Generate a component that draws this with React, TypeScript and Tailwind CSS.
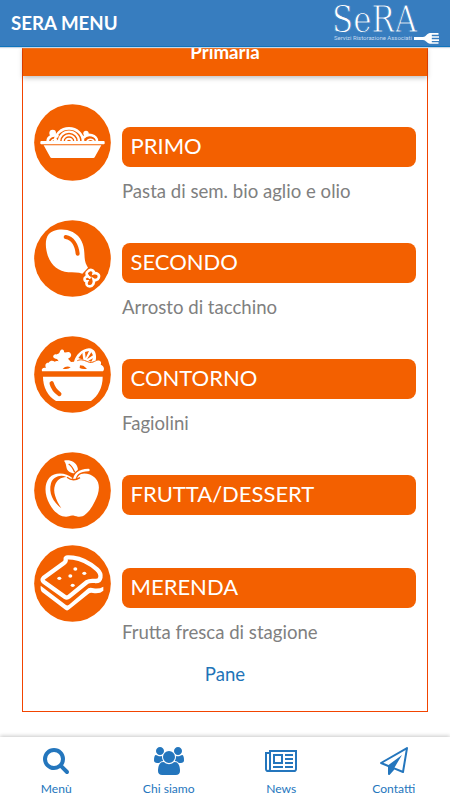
import type { ReactNode } from "react";

const ORANGE = "#f36000";

function PastaIcon() {
  return (
    <svg viewBox="42 27 231 231" className="block size-[77px]">
      <circle cx="157.5" cy="142.5" r="115" fill={ORANGE} />
      <circle cx="98" cy="114" r="10" fill="#fff" />
      <circle cx="198" cy="115" r="8" fill="#fff" />
      <g fill="none" stroke="#fff" strokeWidth="6">
        <path d="M105 139A42 39 0 0 1 189 139" strokeWidth="8" />
        <path d="M117 139A30 29 0 0 1 177 139" strokeWidth="7" />
        <path d="M128 139A19 18 0 0 1 166 139" />
        <path d="M138 139A9 8 0 0 1 156 139" />
        <path d="M83 139A20 18 0 0 1 115 125" strokeWidth="8" />
        <path d="M94 139A10 9 0 0 1 113 139" strokeWidth="5" />
        <path d="M190 129A22 18 0 0 1 231 139" strokeWidth="8" />
        <path d="M201 139A11 9 0 0 1 222 139" strokeWidth="5" />
      </g>
      <rect x="61" y="138" width="193" height="10" rx="3" fill="#fff" />
      <path d="M71 151H244L224 187Q223 189 220 189H95Q92 189 91 187Z" fill="#fff" />
    </svg>
  );
}

function DrumstickIcon() {
  return (
    <svg viewBox="42 30 231 231" className="block size-[77px]">
      <circle cx="157.5" cy="145.5" r="115" fill={ORANGE} />
      <path d="M86 73C99 58 132 53 158 66C184 80 192 105 193 128C194 145 194 156 201 168L204 173L187 191C175 187 160 188 145 187C116 185 94 167 84 139C76 115 74 88 86 73Z" fill="#fff" />
      <path d="M137 81C157 84 170 104 173 131" fill="none" stroke={ORANGE} strokeWidth="12" strokeLinecap="round" />
      <path d="M204 184C212 176 223 181 221 190C230 187 240 194 236 203C233 211 224 211 221 209C224 218 219 229 209 229C200 229 197 221 201 214C193 214 191 205 197 201C202 198 207 199 209 203M204 184C198 187 199 194 203 197" fill="none" stroke="#fff" strokeWidth="8" strokeLinecap="round" />
    </svg>
  );
}

function SaladIcon() {
  return (
    <svg viewBox="42 33 231 231" className="block size-[77px]">
      <circle cx="157.5" cy="148.5" r="115" fill={ORANGE} />
      <path d="M66 139C63 131 70 127 78 129C74 120 77 112 86 113C91 105 99 106 104 110C108 107 112 108 116 109L111 102C99 102 95 91 106 88C113 89 119 86 120 79C123 70 134 72 132 82C139 84 146 78 151 84C157 91 151 99 144 101L153 111L162 110C168 90 184 72 207 70C225 71 231 87 227 108C238 103 247 110 242 119C252 123 255 132 249 139Z" fill="#fff" />
      <path d="M172 107C184 101 195 107 208 112C217 114 222 109 227 108" fill="none" stroke={ORANGE} strokeWidth="3" />
      <path d="M175 99L187 84L190 104ZM195 81L207 78L197 99ZM214 82L219 91L201 103ZM205 107L219 100L214 110Z" fill={ORANGE} />
      <path d="M128 131Q139 121 152 127Q144 135 128 131ZM180 121L190 122L201 131Q188 133 179 129Z" fill={ORANGE} />
      <path d="M69 155H248C248 187 235 211 213 228H108C83 213 69 186 69 155Z" fill="#fff" />
      <path d="M95 175Q100 194 118 207" fill="none" stroke={ORANGE} strokeWidth="13" strokeLinecap="round" />
    </svg>
  );
}

function AppleIcon() {
  return (
    <svg viewBox="42 21 231 231" className="block size-[77px]">
      <circle cx="157.5" cy="136.5" r="115" fill={ORANGE} />
      <path d="M158 100C176 80 208 82 225 98C244 117 237 146 224 170C210 198 194 218 174 215C164 213 156 209 147 214C127 220 103 204 89 178C73 150 72 116 88 98C105 80 138 82 158 100Z" fill="#fff" />
      <path d="M139 96C121 87 99 96 93 115C85 143 99 172 124 190C107 164 98 140 105 121C111 104 122 97 139 96Z" fill={ORANGE} />
      <path d="M132 47C150 43 167 51 172 65C176 73 172 80 169 86C155 86 143 80 140 70C138 61 138 54 132 47Z" fill="#fff" />
      <path d="M146 57Q157 64 164 82" fill="none" stroke={ORANGE} strokeWidth="4" />
      <path d="M164 103C163 89 177 76 205 75" fill="none" stroke={ORANGE} strokeWidth="15" />
      <path d="M163 107C163 89 177 76 205 75" fill="none" stroke="#fff" strokeWidth="8" strokeLinecap="round" />
      <path d="M141 97Q159 111 180 98" fill="none" stroke={ORANGE} strokeWidth="4" />
    </svg>
  );
}

function ToastIcon() {
  return (
    <svg viewBox="42 21 231 231" className="block size-[77px]">
      <circle cx="157.5" cy="136.5" r="115" fill={ORANGE} />
      <path d="M62 143L138 201Q142 204 147 200L205 151Q211 147 221 151Q237 154 250 146V158Q240 168 219 165Q211 163 205 168L148 214Q142 220 136 215L66 162Q61 157 62 143Z" fill="#fff" />
      <path d="M71 119L133 74Q138 70 137 64C135 56 150 58 159 59C185 62 211 77 231 94C248 110 243 130 226 129C216 128 208 127 201 132L147 176Q141 181 135 177L72 132Q64 126 71 119Z" fill={ORANGE} stroke="#fff" strokeWidth="13" strokeLinejoin="round" />
      <g fill="#fff">
        <ellipse cx="166" cy="93" rx="6" ry="5" />
        <ellipse cx="151" cy="114" rx="6" ry="5" />
        <ellipse cx="193" cy="106" rx="6" ry="5" />
        <ellipse cx="118" cy="121" rx="6" ry="5" />
        <ellipse cx="158" cy="142" rx="6" ry="5" />
      </g>
    </svg>
  );
}

function Logo() {
  return (
    <svg viewBox="0 0 110 47" className="h-[47px] w-[110px] overflow-visible">
      <text x="-1" y="31.5" textLength="85" lengthAdjust="spacingAndGlyphs" fontSize="37.5" fill="#fff" stroke="#377dbf" strokeWidth="0.9" className="font-['DejaVu_Serif_Condensed','DejaVu_Serif',serif]">
        SeRA
      </text>
      <text x="1" y="40" textLength="78" lengthAdjust="spacingAndGlyphs" fontSize="5.8" fill="#c6daee" className="font-[Roboto,sans-serif]">
        Servizi Ristorazione Associati
      </text>
      <path d="M81 37H90C93 37 94 33 97 33H105.5V34.7H98.8V36.2H106V37.8H98.8V39.3H106V41H98.8V42.3H105.5V43.7H97C94 43.7 93 40 90 40H81Z" fill="#fff" />
    </svg>
  );
}

type Course = { title: string; dish?: string; icon: ReactNode };

const courses: Course[] = [
  { title: "PRIMO", dish: "Pasta di sem. bio aglio e olio", icon: <PastaIcon /> },
  { title: "SECONDO", dish: "Arrosto di tacchino", icon: <DrumstickIcon /> },
  { title: "CONTORNO", dish: "Fagiolini", icon: <SaladIcon /> },
  { title: "FRUTTA/DESSERT", icon: <AppleIcon /> },
  { title: "MERENDA", dish: "Frutta fresca di stagione", icon: <ToastIcon /> },
];

const tabs = [
  {
    label: "Menù",
    viewBox: "64 128 1664 1664",
    size: "h-[26px] w-[26px]",
    path: "M1216 832q0-185-131.5-316.5t-316.5-131.5-316.5 131.5-131.5 316.5 131.5 316.5 316.5 131.5 316.5-131.5 131.5-316.5zm512 832q0 52-38 90t-90 38q-54 0-90-38l-343-342q-179 124-399 124-143 0-273.5-55.5t-225-150-150-225-55.5-273.5 55.5-273.5 150-225 225-150 273.5-55.5 273.5 55.5 225 150 150 225 55.5 273.5q0 220-124 399l343 343q37 37 37 90z",
  },
  {
    label: "Chi siamo",
    viewBox: "-64 0 1920 1792",
    size: "h-[28px] w-[30px]",
    path: "M529 896q-162 5-265 128h-134q-82 0-138-40.5t-56-118.5q0-353 124-353 6 0 43.5 21t97.5 42.5 119 21.5q67 0 133-23-5 37-5 66 0 139 81 256zm1071 637q0 120-73 189.5t-194 69.5h-874q-121 0-194-69.5t-73-189.5q0-53 3.5-103.5t14-109 26.5-108.5 43-97.5 62-81 85.5-53.5 111.5-20q10 0 43 21.5t73 48 107 48 135 21.5 135-21.5 107-48 73-48 43-21.5q61 0 111.5 20t85.5 53.5 62 81 43 97.5 26.5 108.5 14 109 3.5 103.5zm-1024-1277q0 106-75 181t-181 75-181-75-75-181 75-181 181-75 181 75 75 181zm704 384q0 159-112.5 271.5t-271.5 112.5-271.5-112.5-112.5-271.5 112.5-271.5 271.5-112.5 271.5 112.5 112.5 271.5zm576 225q0 78-56 118.5t-138 40.5h-134q-103-123-265-128 81-117 81-256 0-29-5-66 66 23 133 23 59 0 119-21.5t97.5-42.5 43.5-21q124 0 124 353zm-128-609q0 106-75 181t-181 75-181-75-75-181 75-181 181-75 181 75 75 181z",
  },
  {
    label: "News",
    viewBox: "0 0 2048 1664",
    size: "h-[26px] w-[32px]",
    path: "M1024 512h-384v384h384v-384zM1152 1152v128h-640v-128h640zM1152 384v640h-640v-640h640zM1792 1152v128h-512v-128h512zM1792 896v128h-512v-128h512zM1792 640v128h-512v-128h512zM1792 384v128h-512v-128h512zM256 1344v-960h-128v960q0 26 19 45t45 19 45-19 19-45zM1920 1344v-1088h-1536v1088q0 33-11 64h1483q26 0 45-19t19-45zM2048 128v1216q0 80-56 136t-136 56h-1664q-80 0-136-56t-56-136v-1088h256v-128h1792z",
  },
  {
    label: "Contatti",
    viewBox: "0 0 1792 1792",
    size: "h-[28px] w-[28px]",
    path: "M1764 11q33 24 27 64l-256 1536q-5 29-32 45-14 8-31 8-11 0-24-5l-527-215-298 327q-18 21-47 21-14 0-23-4-19-7-30-23.5t-11-36.5v-452l-472-193q-37-14-40-55-3-39 32-59l1664-960q35-21 68 2zm-342 1499l221-1323-1434 827 336 137 863-639-478 797z",
  },
];

export default function App() {
  return (
    <div className="flex h-[800px] w-[450px] flex-col overflow-hidden bg-white font-[Lato,sans-serif]">
      <header className="z-10 flex h-[47px] shrink-0 items-center justify-between border-b border-[#0f74bd] bg-[#377dbf] pr-[7px] pl-[11px] shadow-[0_1px_1px_#c9d6e3]">
        <h1 className="text-[18.7px] leading-6 font-bold text-white">SERA MENU</h1>
        <Logo />
      </header>

      <main className="flex min-h-0 flex-1 flex-col px-[22px]">
        <section className="flex h-[665px] flex-col border-x border-b border-[#f24400]">
          <div className="h-[29px] shrink-0 bg-[#f36000] text-center shadow-[0_2px_5px_rgba(0,0,0,0.25)]">
            <h2 className="-mt-[7px] text-[18.7px] leading-6 font-bold text-white">Primaria</h2>
          </div>

          <div className="mt-[28px] flex flex-col px-[11px]">
            {courses.map((course) => (
              <div key={course.title} className={course.dish ? "flex h-[116px] gap-[11px]" : "flex h-[93px] gap-[11px]"}>
                <div className="shrink-0">{course.icon}</div>
                <div className="flex-1 pt-[23px]">
                  <h3 className="h-10 rounded-lg bg-[#f36000] pl-[8.5px] text-[22px] leading-[37px] text-white">{course.title}</h3>
                  {course.dish && <p className="mt-[12px] text-[18.6px] leading-6 text-[#808080]">{course.dish}</p>}
                </div>
              </div>
            ))}
          </div>
          <a href="#" className="mt-[1px] text-center text-[18.6px] leading-6 text-[#1f74b8]">Pane</a>
        </section>
      </main>

      <nav className="grid h-[63px] shrink-0 grid-cols-4 bg-white shadow-[0_-1px_4px_rgba(0,0,0,0.22)]">
        {tabs.map((tab) => (
          <a key={tab.label} href="#" className="flex flex-col items-center pt-[9px] text-[#2476bd]">
            <span className="flex h-[30px] items-center justify-center">
              <svg viewBox={tab.viewBox} className={tab.size} fill="currentColor">
                <path d={tab.path} />
              </svg>
            </span>
            <span className="mt-[5px] text-[12.1px] leading-4">{tab.label}</span>
          </a>
        ))}
      </nav>
    </div>
  );
}
